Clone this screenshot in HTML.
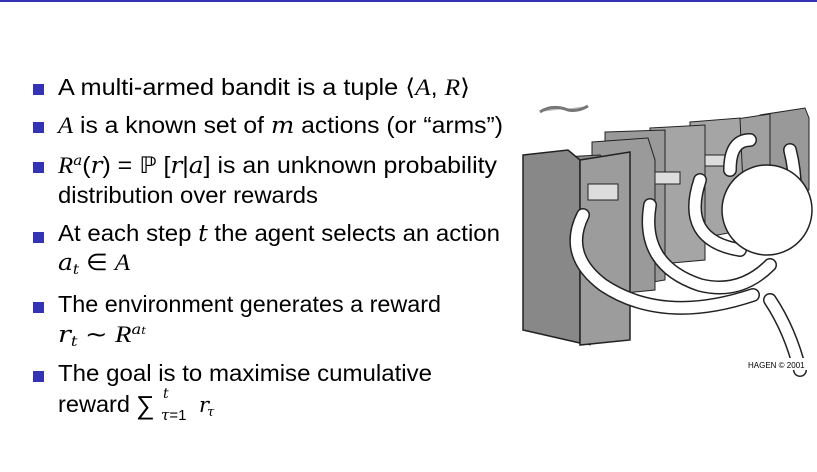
<!DOCTYPE html>
<html><head><meta charset="utf-8"><style>
html,body{margin:0;padding:0;background:#fff;width:817px;height:472px;overflow:hidden}
svg{display:block}
text{font-family:"Liberation Sans","DejaVu Sans",sans-serif;fill:#000}
.m{font-family:"DejaVu Serif","Liberation Serif",serif;font-style:italic}
.c{font-family:"Liberation Serif",serif;font-style:italic}
</style></head><body>
<svg width="817" height="472" viewBox="0 0 817 472">
<rect x="0" y="0" width="817" height="2" fill="#3333b3"/>
<g fill="#3333b3">
<rect x="33" y="84" width="11" height="11"/>
<rect x="33" y="122" width="11" height="11"/>
<rect x="33" y="162" width="11" height="11"/>
<rect x="33" y="232" width="11" height="11"/>
<rect x="33" y="302" width="11" height="11"/>
<rect x="33" y="371" width="11" height="11"/>
</g>
<g style="font-size:23px">
<text x="58" y="95" textLength="412" lengthAdjust="spacingAndGlyphs">A multi-armed bandit is a tuple ⟨<tspan class="c">A</tspan>, <tspan class="c">R</tspan>⟩</text>
<text x="58" y="133" textLength="445" lengthAdjust="spacingAndGlyphs"><tspan class="c">A</tspan> is a known set of <tspan class="m">m</tspan> actions (or “arms”)</text>
<text x="58" y="173" textLength="439" lengthAdjust="spacingAndGlyphs"><tspan class="c">R</tspan><tspan class="m" style="font-size:14px" dy="-8">a</tspan><tspan dy="8">(</tspan><tspan class="m">r</tspan>) = ℙ [<tspan class="m">r</tspan>|<tspan class="m">a</tspan>] is an unknown probability</text>
<text x="58" y="203" textLength="260" lengthAdjust="spacingAndGlyphs">distribution over rewards</text>
<text x="58" y="241" textLength="442" lengthAdjust="spacingAndGlyphs">At each step <tspan class="m">t</tspan> the agent selects an action</text>
<text x="58" y="270" textLength="72" lengthAdjust="spacingAndGlyphs"><tspan class="m">a</tspan><tspan class="m" style="font-size:14px" dy="4">t</tspan><tspan dy="-4"> ∈ </tspan><tspan class="c">A</tspan></text>
<text x="58" y="312" textLength="383" lengthAdjust="spacingAndGlyphs">The environment generates a reward</text>
<text x="58" y="342" textLength="88" lengthAdjust="spacingAndGlyphs"><tspan class="m">r</tspan><tspan class="m" style="font-size:14px" dy="4">t</tspan><tspan dy="-4"> ∼ </tspan><tspan class="c">R</tspan><tspan class="m" style="font-size:14px" dy="-8">a</tspan><tspan class="m" style="font-size:10px">t</tspan></text>
<text x="58" y="381" textLength="374" lengthAdjust="spacingAndGlyphs">The goal is to maximise cumulative</text>
<text x="58" y="412" textLength="72" lengthAdjust="spacingAndGlyphs">reward</text>
</g>
<text x="136" y="414" style="font-size:26px">∑</text>
<text x="163" y="398" class="m" style="font-size:14px">t</text>
<text x="161" y="420" style="font-size:15px"><tspan class="m">τ</tspan>=1</text>
<text x="199" y="412" class="m" style="font-size:21px">r</text><text x="207" y="416" class="m" style="font-size:13px">τ</text>
<g>
<rect x="523" y="100" width="286" height="270" fill="#fff"/>
<path d="M540 112 q12-8 28-2 q10 2 20-4" stroke="#777" stroke-width="3" fill="#bbb"/>
<polygon points="760,115 805,108 809,118 809,190 760,195" fill="#999" stroke="#222"/>
<polygon points="730,120 770,114 770,215 730,220" fill="#a0a0a0" stroke="#222"/>
<polygon points="690,122 740,118 745,230 690,240" fill="#a5a5a5" stroke="#222"/>
<polygon points="650,128 705,125 705,260 650,265" fill="#a5a5a5" stroke="#222"/>
<polygon points="605,132 665,130 665,280 605,290" fill="#999" stroke="#222"/>
<polygon points="592,142 648,138 655,160 655,290 605,295 592,290" fill="#9a9a9a" stroke="#222"/>
<polygon points="537,185 545,158 600,155 615,170 615,322 590,345 537,330" fill="#8c8c8c" stroke="#222"/>
<polygon points="523,155 568,150 580,160 580,343 523,330" fill="#888" stroke="#222" stroke-width="1.5"/>
<polygon points="580,160 630,152 630,340 580,345" fill="#9c9c9c" stroke="#222" stroke-width="1.5"/>
<rect x="588" y="184" width="30" height="16" fill="#ddd" stroke="#222"/>
<rect x="655" y="172" width="25" height="12" fill="#ddd" stroke="#222"/>
<rect x="705" y="155" width="22" height="11" fill="#ddd" stroke="#222"/>
<g fill="none" stroke="#222" stroke-width="14" stroke-linecap="round">
<path d="M583 215 q-20 40 20 70 q60 40 150 10"/>
<path d="M650 205 q-10 60 50 80 q40 10 70 -20"/>
<path d="M700 180 q-20 60 40 70"/>
<path d="M770 300 q20 30 30 70"/>
<path d="M730 170 q0-30 20-30"/>
<path d="M790 150 q10 40 0 80"/>
</g>
<g fill="none" stroke="#fff" stroke-width="11" stroke-linecap="round">
<path d="M583 215 q-20 40 20 70 q60 40 150 10"/>
<path d="M650 205 q-10 60 50 80 q40 10 70 -20"/>
<path d="M700 180 q-20 60 40 70"/>
<path d="M770 300 q20 30 30 70"/>
<path d="M730 170 q0-30 20-30"/>
<path d="M790 150 q10 40 0 80"/>
</g>
<circle cx="767" cy="210" r="45" fill="#fff" stroke="#222" stroke-width="1.5"/>
<rect x="740" y="358" width="69" height="12" fill="#fff"/>
<text x="748" y="368" style="font-size:8px" fill="#222">HAGEN © 2001</text>
</g>
</svg>
</body></html>
